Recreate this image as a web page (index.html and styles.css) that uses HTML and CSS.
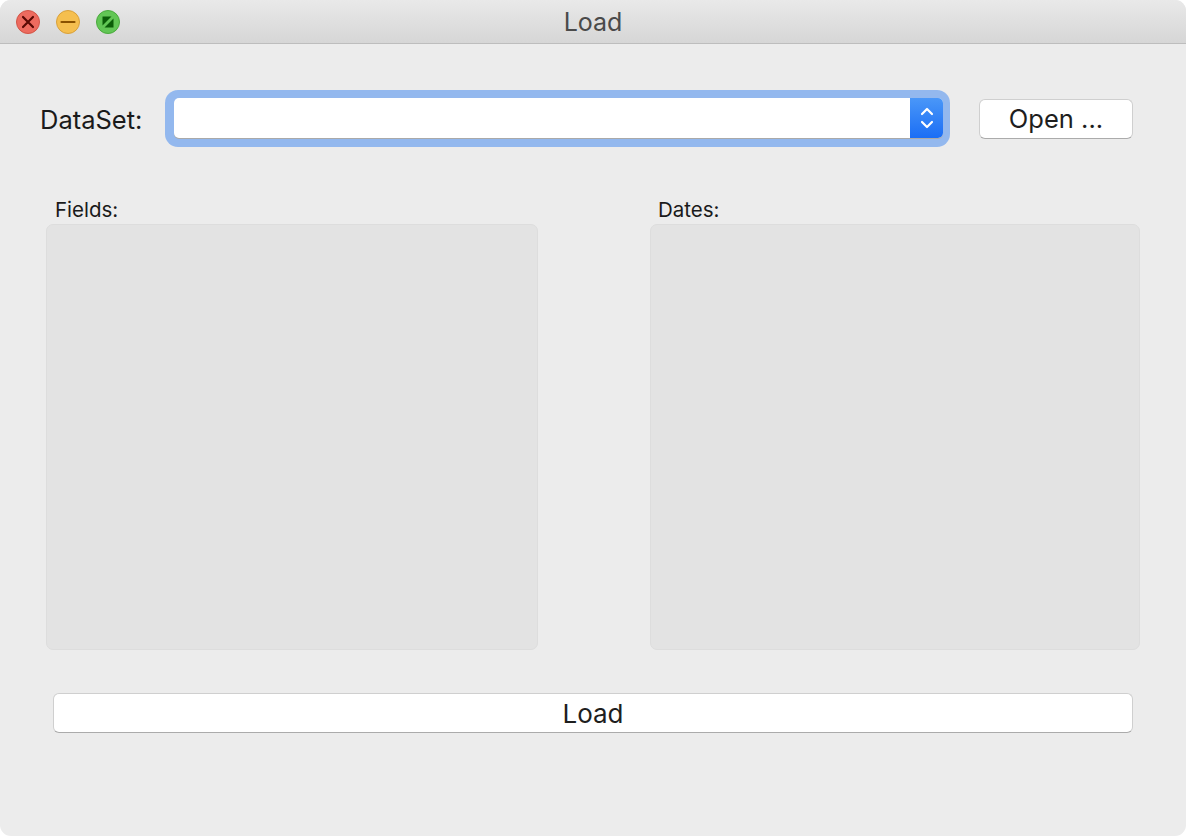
FILE: index.html
```html
<!DOCTYPE html>
<html>
<head>
<meta charset="utf-8">
<link rel="stylesheet" href="styles.css">
</head>
<body>
<div class="window">
  <div class="titlebar">
    <div class="lights">
      <span class="light close"><svg width="24" height="24" viewBox="0 0 24 24"><path d="M7 7 L17 17 M17 7 L7 17" stroke="#5a0a04" stroke-width="2.2" stroke-linecap="round"/></svg></span>
      <span class="light min"><svg width="24" height="24" viewBox="0 0 24 24"><path d="M5.5 12 H18.5" stroke="#8a5200" stroke-width="2.2" stroke-linecap="round"/></svg></span>
      <span class="light max"><svg width="24" height="24" viewBox="0 0 24 24"><path d="M6.5 6.5 H15.5 L6.5 15.5 Z" fill="#0b5d08"/><path d="M17.5 17.5 H8.5 L17.5 8.5 Z" fill="#0b5d08"/></svg></span>
    </div>
    <div class="title">Load</div>
  </div>
  <div class="content">
    <div class="toprow">
      <label class="lbl">DataSet:</label>
      <div class="ring">
        <div class="combo">
          <div class="combo-text"></div>
          <div class="combo-arrows"><svg width="20" height="30" viewBox="0 0 20 30"><path d="M5 11 L10 6 L15 11 M5 19 L10 24 L15 19" fill="none" stroke="#fff" stroke-width="2.2" stroke-linecap="round" stroke-linejoin="round"/></svg></div>
        </div>
      </div>
      <button class="btn open">Open ...</button>
    </div>
    <div class="lists">
      <div class="col left">
        <div class="collabel">Fields:</div>
        <div class="listbox"></div>
      </div>
      <div class="col right">
        <div class="collabel">Dates:</div>
        <div class="listbox"></div>
      </div>
    </div>
    <button class="btn load">Load</button>
  </div>
</div>
</body>
</html>
```
FILE: styles.css
```css
html, body {
  margin: 0;
  padding: 0;
  background: #ffffff;
}
body {
  width: 1186px;
  height: 836px;
  overflow: hidden;
  font-family: "Inter", "Liberation Sans", "Helvetica", sans-serif;
}
.window {
  width: 1186px;
  height: 836px;
  background: #ececec;
  border-radius: 11px;
  overflow: hidden;
  display: flex;
  flex-direction: column;
  box-sizing: border-box;
}
.titlebar {
  height: 44px;
  box-sizing: border-box;
  border-bottom: 1px solid #bdbdbd;
  background: linear-gradient(#e9e9e9, #d6d6d6);
  position: relative;
  display: flex;
  align-items: center;
  justify-content: center;
}
.lights {
  position: absolute;
  left: 16px;
  top: 10px;
  display: flex;
  gap: 16px;
}
.light {
  width: 24px;
  height: 24px;
  border-radius: 50%;
  box-sizing: border-box;
  display: block;
}
.light svg { display: block; margin: -1px; }
.close { background: #ed6b5f; border: 1px solid #d25446; }
.min { background: #f5bf4f; border: 1px solid #d8a03b; }
.max { background: #62c655; border: 1px solid #4aa93d; }
.title {
  font-size: 25px;
  color: #4a4a4a;
  margin-top: 1px;
}
.content {
  display: flex;
  flex-direction: column;
  padding-top: 46px;
}
.toprow {
  display: flex;
  align-items: center;
  height: 57px;
  padding-left: 40px;
}
.lbl {
  font-size: 25.5px;
  color: #1a1a1a;
  width: 125px;
  margin-top: 2px;
}
.ring {
  width: 785px;
  height: 57px;
  box-sizing: border-box;
  background: #93b8ee;
  border-radius: 13px;
  padding: 8px 7px 9px 9px;
}
.combo {
  height: 40px;
  background: #ffffff;
  border-radius: 5px;
  display: flex;
  box-shadow: 0 1px 0 #a9a9a9;
  overflow: hidden;
}
.combo-text { flex: 1; }
.combo-arrows {
  width: 33px;
  background: linear-gradient(#4a97f8, #1b6ef5);
  display: flex;
  align-items: center;
  justify-content: center;
}
.btn {
  font-family: "Inter", "Liberation Sans", sans-serif;
  background: #ffffff;
  border: 1px solid #cfcfcf;
  border-bottom-color: #ababab;
  border-radius: 6px;
  color: #1e1e1e;
  font-size: 25.5px;
  padding: 0;
  box-sizing: border-box;
  height: 40px;
}
.open {
  width: 154px;
  margin-left: 29px;
}
.lists {
  display: flex;
  margin-top: 51px;
  padding-left: 46px;
  gap: 112px;
}
.col {
  display: flex;
  flex-direction: column;
}
.left { width: 492px; }
.right { width: 490px; }
.collabel {
  font-size: 20.5px;
  color: #1a1a1a;
  height: 24px;
  line-height: 24px;
  margin-bottom: 2px;
}
.left .collabel { padding-left: 9px; }
.right .collabel { padding-left: 8px; }
.listbox {
  height: 426px;
  box-sizing: border-box;
  background: #e3e3e3;
  border: 1px solid #dddddd;
  border-radius: 7px;
}
.load {
  margin-top: 43px;
  margin-left: 53px;
  width: 1080px;
  font-size: 26px;
}
```
